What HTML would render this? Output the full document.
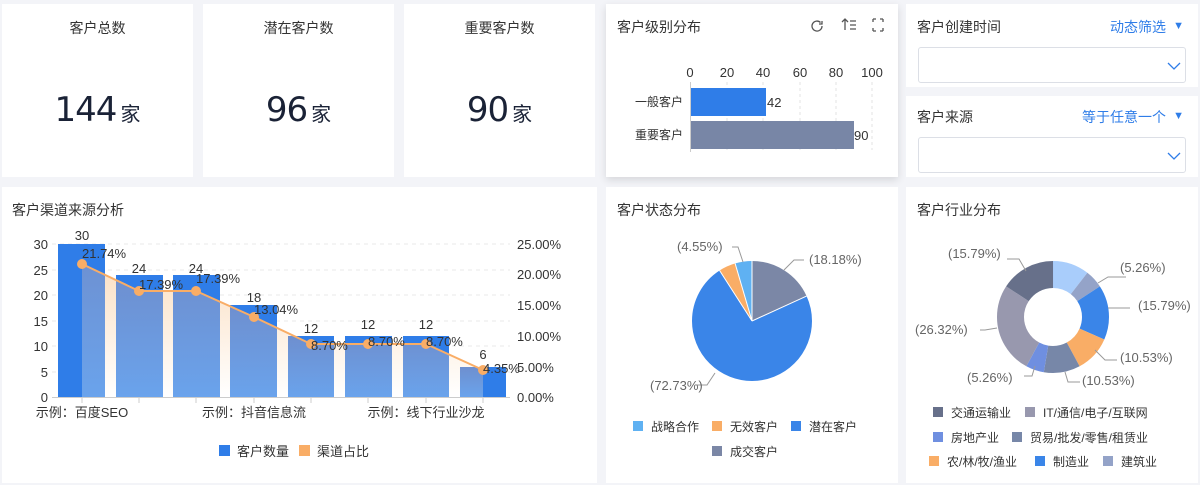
<!DOCTYPE html>
<html><head><meta charset="utf-8"><style>
*{margin:0;padding:0;box-sizing:border-box}
body{width:1200px;height:485px;background:#f3f4f8;font-family:"Liberation Sans","Noto Sans CJK SC",sans-serif;position:relative;overflow:hidden;color:#333}
.c{position:absolute;background:#fff}
.t{position:absolute;font-size:14px;color:#333}
.num{position:absolute;left:0;right:0;top:86px;text-align:center;color:#1a2236}
.num b{font-weight:normal;font-size:34px;font-family:"DejaVu Sans","Liberation Sans",sans-serif;letter-spacing:-1px}
.num span{font-size:20px;margin-left:4px}
svg{position:absolute;left:0;top:0}
.sel{position:absolute;left:12px;right:12px;height:36px;border:1px solid #dcdfe6;border-radius:3px}
.blue{color:#2f7de8}
</style></head><body>
<div class="c" style="left:2px;top:4px;width:191px;height:173px"><div class="t" style="left:0;right:0;top:14px;text-align:center">客户总数</div><div class="num"><b>144</b><span>家</span></div></div>
<div class="c" style="left:203px;top:4px;width:191px;height:173px"><div class="t" style="left:0;right:0;top:14px;text-align:center">潜在客户数</div><div class="num"><b>96</b><span>家</span></div></div>
<div class="c" style="left:404px;top:4px;width:191px;height:173px"><div class="t" style="left:0;right:0;top:14px;text-align:center">重要客户数</div><div class="num"><b>90</b><span>家</span></div></div>

<div class="c" style="left:606px;top:4px;width:292px;height:173px;box-shadow:0 3px 8px rgba(0,0,0,0.12)"><div class="t" style="left:11px;top:13px">客户级别分布</div>
<svg width="292" height="173" style="left:0;top:0">
<g fill="none" stroke="#555" stroke-width="1.3">
<path d="M216 22a5 5 0 1 1-1.5-3.5M216 17v3h-3"/>
<path d="M239 15v11M236 18l3-3 3 3M244 17h6M244 21h6M244 25h6"/>
<path d="M267 15h3M267 15v3M277 15h-3M277 15v3M267 27h3M267 27v-3M277 27h-3M277 27v-3"/>
</g></svg></div>
<svg width="1200" height="485" style="pointer-events:none">
<g stroke="#e3e3e3" stroke-dasharray="3 3"><line x1="727" y1="82" x2="727" y2="150"/><line x1="763" y1="82" x2="763" y2="150"/><line x1="800" y1="82" x2="800" y2="150"/><line x1="836" y1="82" x2="836" y2="150"/><line x1="872" y1="82" x2="872" y2="150"/></g>
<line x1="690.5" y1="82" x2="690.5" y2="152" stroke="#ccc"/>
<g font-size="13" fill="#333" text-anchor="middle"><text x="690" y="77">0</text><text x="727" y="77">20</text><text x="763" y="77">40</text><text x="800" y="77">60</text><text x="836" y="77">80</text><text x="872" y="77">100</text></g>
<rect x="691" y="88" width="75" height="28" fill="#2f7de8"/><rect x="691" y="121" width="163" height="28" fill="#7886a6"/>
<g font-size="12" fill="#333"><text x="683" y="106" text-anchor="end">一般客户</text><text x="683" y="139" text-anchor="end">重要客户</text><text x="767" y="107" font-size="13">42</text><text x="854" y="140" font-size="13">90</text></g>
</svg>

<div class="c" style="left:906px;top:4px;width:292px;height:83px"><div class="t" style="left:11px;top:13px">客户创建时间</div><div class="t blue" style="right:32px;top:13px">动态筛选</div><div class="t blue" style="right:14px;top:16px;font-size:11px">▼</div><div class="sel" style="top:43px"><svg width="14" height="10" style="left:248px;top:13px"><path d="M1 2l6 6 6-6" fill="none" stroke="#2f7de8" stroke-width="1.3"/></svg></div></div>
<div class="c" style="left:906px;top:96px;width:292px;height:81px"><div class="t" style="left:11px;top:11px">客户来源</div><div class="t blue" style="right:32px;top:11px">等于任意一个</div><div class="t blue" style="right:14px;top:14px;font-size:11px">▼</div><div class="sel" style="top:41px"><svg width="14" height="10" style="left:248px;top:13px"><path d="M1 2l6 6 6-6" fill="none" stroke="#2f7de8" stroke-width="1.3"/></svg></div></div>

<div class="c" style="left:2px;top:187px;width:595px;height:296px"><div class="t" style="left:10px;top:13px">客户渠道来源分析</div></div>
<div class="c" style="left:606px;top:187px;width:292px;height:296px"><div class="t" style="left:11px;top:13px">客户状态分布</div></div>
<div class="c" style="left:906px;top:187px;width:292px;height:296px"><div class="t" style="left:11px;top:13px">客户行业分布</div></div>

<svg width="1200" height="485">
<defs>
<linearGradient id="ar" x1="0" y1="0" x2="0" y2="1"><stop offset="0" stop-color="#fbe0c4"/><stop offset="1" stop-color="#fff"/></linearGradient>
<linearGradient id="bb" x1="0" y1="0" x2="0" y2="1"><stop offset="0" stop-color="#6e8fcf"/><stop offset="1" stop-color="#6aa3ec"/></linearGradient>
<clipPath id="cl"><path d="M82 264L139 291L196 291L254 317L311 344L368 344L426 344L483 370L483 397L82 397Z"/></clipPath>
</defs>
<g stroke="#e8e8e8" stroke-dasharray="4 4"><line x1="52" y1="244" x2="510" y2="244"/><line x1="52" y1="270" x2="510" y2="270"/><line x1="52" y1="295" x2="510" y2="295"/><line x1="52" y1="321" x2="510" y2="321"/><line x1="52" y1="346" x2="510" y2="346"/><line x1="52" y1="372" x2="510" y2="372"/></g>
<path d="M82 264L139 291L196 291L254 317L311 344L368 344L426 344L483 370L483 397L82 397Z" fill="url(#ar)"/>
<g id="bars" fill="#2f7de8">
<rect x="58" y="244" width="47" height="153"/><rect x="116" y="275" width="47" height="122"/><rect x="173" y="275" width="47" height="122"/><rect x="230" y="305" width="47" height="92"/><rect x="288" y="336" width="46" height="61"/><rect x="345" y="336" width="47" height="61"/><rect x="403" y="336" width="46" height="61"/><rect x="460" y="367" width="46" height="30"/></g>
<g clip-path="url(#cl)" fill="url(#bb)">
<rect x="58" y="244" width="47" height="153"/><rect x="116" y="275" width="47" height="122"/><rect x="173" y="275" width="47" height="122"/><rect x="230" y="305" width="47" height="92"/><rect x="288" y="336" width="46" height="61"/><rect x="345" y="336" width="47" height="61"/><rect x="403" y="336" width="46" height="61"/><rect x="460" y="367" width="46" height="30"/></g>
<line x1="52" y1="397.5" x2="510" y2="397.5" stroke="#ccc"/>
<g stroke="#ccc"><line x1="82" y1="398" x2="82" y2="403"/><line x1="139" y1="398" x2="139" y2="403"/><line x1="196" y1="398" x2="196" y2="403"/><line x1="254" y1="398" x2="254" y2="403"/><line x1="311" y1="398" x2="311" y2="403"/><line x1="368" y1="398" x2="368" y2="403"/><line x1="426" y1="398" x2="426" y2="403"/><line x1="483" y1="398" x2="483" y2="403"/></g>
<polyline points="82,264 139,291 196,291 254,317 311,344 368,344 426,344 483,370" fill="none" stroke="#f9ad66" stroke-width="2"/>
<g fill="#f9ad66"><circle cx="82" cy="264" r="5"/><circle cx="139" cy="291" r="5"/><circle cx="196" cy="291" r="5"/><circle cx="254" cy="317" r="5"/><circle cx="311" cy="344" r="5"/><circle cx="368" cy="344" r="5"/><circle cx="426" cy="344" r="5"/><circle cx="483" cy="370" r="5"/></g>
<g font-size="13" fill="#333">
<g text-anchor="end"><text x="48" y="249">30</text><text x="48" y="275">25</text><text x="48" y="300">20</text><text x="48" y="326">15</text><text x="48" y="351">10</text><text x="48" y="377">5</text><text x="48" y="402">0</text></g>
<text x="517" y="249">25.00%</text><text x="517" y="279">20.00%</text><text x="517" y="310">15.00%</text><text x="517" y="341">10.00%</text><text x="517" y="372">5.00%</text><text x="517" y="402">0.00%</text>
<g text-anchor="middle"><text x="82" y="240">30</text><text x="139" y="273">24</text><text x="196" y="273">24</text><text x="254" y="302">18</text><text x="311" y="333">12</text><text x="368" y="329">12</text><text x="426" y="329">12</text><text x="483" y="359">6</text></g>
<text x="82" y="258">21.74%</text><text x="139" y="289">17.39%</text><text x="196" y="283">17.39%</text><text x="254" y="314">13.04%</text><text x="311" y="350">8.70%</text><text x="368" y="346">8.70%</text><text x="426" y="346">8.70%</text><text x="483" y="373">4.35%</text>
<text x="82" y="417" text-anchor="middle">示例：百度SEO</text><text x="254" y="417" text-anchor="middle">示例：抖音信息流</text><text x="426" y="417" text-anchor="middle">示例：线下行业沙龙</text>
<rect x="219" y="445" width="11" height="11" fill="#2f7de8"/><text x="237" y="456">客户数量</text>
<rect x="299" y="445" width="11" height="11" fill="#f9ad66"/><text x="317" y="456">渠道占比</text>
</g>

<!-- pie -->
<g transform="rotate(-90 752 321)" fill="none" stroke-width="60">
<circle cx="752" cy="321" r="30" pathLength="100" stroke="#7b87a6" stroke-dasharray="18.18 81.82"/>
<circle cx="752" cy="321" r="30" pathLength="100" stroke="#3a85e8" stroke-dasharray="72.73 27.27" stroke-dashoffset="-18.18"/>
<circle cx="752" cy="321" r="30" pathLength="100" stroke="#f9ad66" stroke-dasharray="4.55 95.45" stroke-dashoffset="-90.91"/>
<circle cx="752" cy="321" r="30" pathLength="100" stroke="#5fb1f2" stroke-dasharray="4.54 95.46" stroke-dashoffset="-95.46"/>
</g>
<g stroke="#fff" stroke-width="1"><line x1="752" y1="321" x2="752" y2="261"/><line x1="752" y1="321" x2="806.6" y2="296.1"/><line x1="752" y1="321" x2="719.6" y2="270.5"/><line x1="752" y1="321" x2="735.1" y2="263.4"/></g>
<g fill="none" stroke="#999"><path d="M784 270l10-10h10"/><path d="M743 262l-5-15h-6"/><path d="M715 373l-8 12h-10"/></g>
<g font-size="13" fill="#666"><text x="809" y="264">(18.18%)</text><text x="677" y="251">(4.55%)</text><text x="650" y="390">(72.73%)</text></g>
<g font-size="12" fill="#333">
<rect x="633" y="421" width="10" height="10" fill="#5fb1f2"/><text x="651" y="431">战略合作</text>
<rect x="712" y="421" width="10" height="10" fill="#f9ad66"/><text x="730" y="431">无效客户</text>
<rect x="791" y="421" width="10" height="10" fill="#3a85e8"/><text x="809" y="431">潜在客户</text>
<rect x="712" y="446" width="10" height="10" fill="#7b87a6"/><text x="730" y="456">成交客户</text>
</g>

<!-- donut -->
<g transform="rotate(-90 1053 317)" fill="none" stroke-width="27">
<circle cx="1053" cy="317" r="42.5" pathLength="100" stroke="#a9cdfb" stroke-dasharray="10.53 89.47"/>
<circle cx="1053" cy="317" r="42.5" pathLength="100" stroke="#94a3c8" stroke-dasharray="5.26 94.74" stroke-dashoffset="-10.53"/>
<circle cx="1053" cy="317" r="42.5" pathLength="100" stroke="#3a85e8" stroke-dasharray="15.79 84.21" stroke-dashoffset="-15.79"/>
<circle cx="1053" cy="317" r="42.5" pathLength="100" stroke="#f9ad66" stroke-dasharray="10.53 89.47" stroke-dashoffset="-31.58"/>
<circle cx="1053" cy="317" r="42.5" pathLength="100" stroke="#7787a8" stroke-dasharray="10.53 89.47" stroke-dashoffset="-42.11"/>
<circle cx="1053" cy="317" r="42.5" pathLength="100" stroke="#6f8fe0" stroke-dasharray="5.26 94.74" stroke-dashoffset="-52.64"/>
<circle cx="1053" cy="317" r="42.5" pathLength="100" stroke="#9898ae" stroke-dasharray="26.32 73.68" stroke-dashoffset="-57.9"/>
<circle cx="1053" cy="317" r="42.5" pathLength="100" stroke="#67708a" stroke-dasharray="15.79 84.21" stroke-dashoffset="-84.22"/>
</g>
<g fill="none" stroke="#999"><path d="M1026 271l-7-12h-12"/><path d="M1098 283l10-6h18"/><path d="M1108 308h22"/><path d="M1095 350l10 10h12"/><path d="M1065 372l3 10h12"/><path d="M1035 366l-3 10h-8"/><path d="M997 328l-12 2h-5"/></g>
<g font-size="13" fill="#666"><text x="948" y="258">(15.79%)</text><text x="1120" y="272">(5.26%)</text><text x="1138" y="310">(15.79%)</text><text x="915" y="334">(26.32%)</text><text x="1120" y="362">(10.53%)</text><text x="967" y="382">(5.26%)</text><text x="1082" y="385">(10.53%)</text></g>
<g font-size="12" fill="#333">
<rect x="933" y="407" width="10" height="10" fill="#67708a"/><text x="951" y="417">交通运输业</text>
<rect x="1025" y="407" width="10" height="10" fill="#9898ae"/><text x="1043" y="417">IT/通信/电子/互联网</text>
<rect x="933" y="432" width="10" height="10" fill="#6f8fe0"/><text x="951" y="442">房地产业</text>
<rect x="1012" y="432" width="10" height="10" fill="#7787a8"/><text x="1030" y="442">贸易/批发/零售/租赁业</text>
<rect x="929" y="456" width="10" height="10" fill="#f9ad66"/><text x="947" y="466">农/林/牧/渔业</text>
<rect x="1035" y="456" width="10" height="10" fill="#3a85e8"/><text x="1053" y="466">制造业</text>
<rect x="1103" y="456" width="10" height="10" fill="#94a3c8"/><text x="1121" y="466">建筑业</text>
</g>
</svg>
</body></html>
